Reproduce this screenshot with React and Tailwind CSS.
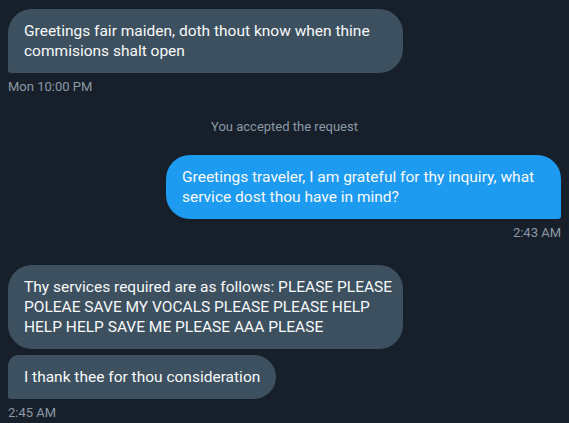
import React from "react";

function Bubble({ mine, corner, children }) {
  const base = "max-w-[395px] px-4 py-3 text-[15.5px] leading-5 whitespace-nowrap text-[#f7f9f9]";
  const color = mine ? "bg-[#1d9bf0]" : "bg-[#3d5060]";
  return <div className={`${base} ${color} ${corner}`}>{children}</div>;
}

function Time({ right, children }) {
  return (
    <div className={`mt-1.5 text-[13px] leading-4 text-[#8b98a5] ${right ? "text-right" : ""}`}>
      {children}
    </div>
  );
}

export default function App() {
  return (
    <div
      className="w-[569px] h-[423px] overflow-hidden bg-[#17202a] px-2 pt-[9px]"
      style={{ fontFamily: 'Roboto, "Liberation Sans", Arial, sans-serif' }}
    >
      <div className="flex flex-col items-start">
        <Bubble corner="w-[395px] rounded-3xl rounded-bl-[3px]">
          Greetings fair maiden, doth thout know when thine
          <br />
          commisions shalt open
        </Bubble>
        <Time>Mon 10:00 PM</Time>
      </div>

      <div className="mt-6 text-center text-[13px] leading-4 text-[#8b98a5]">
        You accepted the request
      </div>

      <div className="mt-5 flex flex-col items-end">
        <Bubble mine corner="w-[395px] rounded-3xl rounded-br-[3px]">
          Greetings traveler, I am grateful for thy inquiry, what
          <br />
          service dost thou have in mind?
        </Bubble>
        <Time right>2:43 AM</Time>
      </div>

      <div className="mt-6 flex flex-col items-start gap-1.5">
        <Bubble corner="w-[395px] rounded-3xl">
          Thy services required are as follows: PLEASE PLEASE
          <br />
          POLEAE SAVE MY VOCALS PLEASE PLEASE HELP
          <br />
          HELP HELP SAVE ME PLEASE AAA PLEASE
        </Bubble>
        <Bubble corner="rounded-3xl rounded-tl-[12px] rounded-bl-[3px]">
          I thank thee for thou consideration
        </Bubble>
      </div>
      <Time>2:45 AM</Time>
    </div>
  );
}
